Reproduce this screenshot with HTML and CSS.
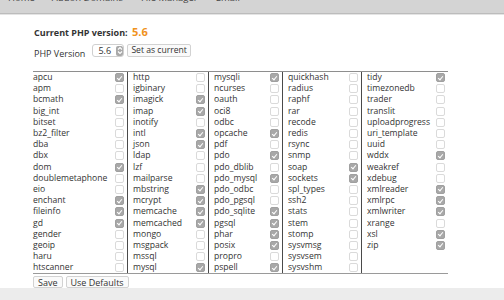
FILE: index.html
```html
<!DOCTYPE html>
<html>
<head>
<meta charset="utf-8">
<link rel="stylesheet" href="styles.css">
</head>
<body>
<div class="topbar">
  <ul class="nav">
    <li class="n1">Home</li>
    <li class="n2">Addon Domains</li>
    <li class="n3">File Manager</li>
    <li class="n4">Email</li>
  </ul>
</div>
<div class="content">
  <div class="current">Current PHP version: <span class="ver">5.6</span></div>
  <div class="vrow">
    <span class="vlabel">PHP Version</span>
    <span class="select">5.6<span class="stepper"><svg width="6" height="9" viewBox="0 0 6 9"><path d="M1 3.5 L3 1.5 L5 3.5 M1 5.5 L3 7.5 L5 5.5" fill="none" stroke="#fff" stroke-width="1.1"/></svg></span></span>
    <span class="btn">Set as current</span>
  </div>
  <div class="table">
    <div class="col c1">
      <div class="row"><span>apcu</span><i class="cb on"></i></div>
      <div class="row"><span>apm</span><i class="cb"></i></div>
      <div class="row"><span>bcmath</span><i class="cb on"></i></div>
      <div class="row"><span>big_int</span><i class="cb"></i></div>
      <div class="row"><span>bitset</span><i class="cb"></i></div>
      <div class="row"><span>bz2_filter</span><i class="cb"></i></div>
      <div class="row"><span>dba</span><i class="cb"></i></div>
      <div class="row"><span>dbx</span><i class="cb"></i></div>
      <div class="row"><span>dom</span><i class="cb on"></i></div>
      <div class="row"><span>doublemetaphone</span><i class="cb"></i></div>
      <div class="row"><span>eio</span><i class="cb"></i></div>
      <div class="row"><span>enchant</span><i class="cb on"></i></div>
      <div class="row"><span>fileinfo</span><i class="cb on"></i></div>
      <div class="row"><span>gd</span><i class="cb on"></i></div>
      <div class="row"><span>gender</span><i class="cb"></i></div>
      <div class="row"><span>geoip</span><i class="cb"></i></div>
      <div class="row"><span>haru</span><i class="cb"></i></div>
      <div class="row"><span>htscanner</span><i class="cb"></i></div>
    </div>
    <div class="col c2">
      <div class="row"><span>http</span><i class="cb"></i></div>
      <div class="row"><span>igbinary</span><i class="cb"></i></div>
      <div class="row"><span>imagick</span><i class="cb on"></i></div>
      <div class="row"><span>imap</span><i class="cb on"></i></div>
      <div class="row"><span>inotify</span><i class="cb"></i></div>
      <div class="row"><span>intl</span><i class="cb on"></i></div>
      <div class="row"><span>json</span><i class="cb on"></i></div>
      <div class="row"><span>ldap</span><i class="cb"></i></div>
      <div class="row"><span>lzf</span><i class="cb"></i></div>
      <div class="row"><span>mailparse</span><i class="cb"></i></div>
      <div class="row"><span>mbstring</span><i class="cb on"></i></div>
      <div class="row"><span>mcrypt</span><i class="cb on"></i></div>
      <div class="row"><span>memcache</span><i class="cb on"></i></div>
      <div class="row"><span>memcached</span><i class="cb on"></i></div>
      <div class="row"><span>mongo</span><i class="cb"></i></div>
      <div class="row"><span>msgpack</span><i class="cb"></i></div>
      <div class="row"><span>mssql</span><i class="cb"></i></div>
      <div class="row"><span>mysql</span><i class="cb on"></i></div>
    </div>
    <div class="col c3">
      <div class="row"><span>mysqli</span><i class="cb on"></i></div>
      <div class="row"><span>ncurses</span><i class="cb"></i></div>
      <div class="row"><span>oauth</span><i class="cb"></i></div>
      <div class="row"><span>oci8</span><i class="cb"></i></div>
      <div class="row"><span>odbc</span><i class="cb"></i></div>
      <div class="row"><span>opcache</span><i class="cb on"></i></div>
      <div class="row"><span>pdf</span><i class="cb"></i></div>
      <div class="row"><span>pdo</span><i class="cb on"></i></div>
      <div class="row"><span>pdo_dblib</span><i class="cb"></i></div>
      <div class="row"><span>pdo_mysql</span><i class="cb on"></i></div>
      <div class="row"><span>pdo_odbc</span><i class="cb"></i></div>
      <div class="row"><span>pdo_pgsql</span><i class="cb"></i></div>
      <div class="row"><span>pdo_sqlite</span><i class="cb on"></i></div>
      <div class="row"><span>pgsql</span><i class="cb on"></i></div>
      <div class="row"><span>phar</span><i class="cb on"></i></div>
      <div class="row"><span>posix</span><i class="cb on"></i></div>
      <div class="row"><span>propro</span><i class="cb"></i></div>
      <div class="row"><span>pspell</span><i class="cb on"></i></div>
    </div>
    <div class="col c4">
      <div class="row"><span>quickhash</span><i class="cb"></i></div>
      <div class="row"><span>radius</span><i class="cb"></i></div>
      <div class="row"><span>raphf</span><i class="cb"></i></div>
      <div class="row"><span>rar</span><i class="cb"></i></div>
      <div class="row"><span>recode</span><i class="cb"></i></div>
      <div class="row"><span>redis</span><i class="cb"></i></div>
      <div class="row"><span>rsync</span><i class="cb"></i></div>
      <div class="row"><span>snmp</span><i class="cb"></i></div>
      <div class="row"><span>soap</span><i class="cb on"></i></div>
      <div class="row"><span>sockets</span><i class="cb on"></i></div>
      <div class="row"><span>spl_types</span><i class="cb"></i></div>
      <div class="row"><span>ssh2</span><i class="cb"></i></div>
      <div class="row"><span>stats</span><i class="cb"></i></div>
      <div class="row"><span>stem</span><i class="cb"></i></div>
      <div class="row"><span>stomp</span><i class="cb"></i></div>
      <div class="row"><span>sysvmsg</span><i class="cb"></i></div>
      <div class="row"><span>sysvsem</span><i class="cb"></i></div>
      <div class="row"><span>sysvshm</span><i class="cb"></i></div>
    </div>
    <div class="col c5">
      <div class="row"><span>tidy</span><i class="cb on"></i></div>
      <div class="row"><span>timezonedb</span><i class="cb"></i></div>
      <div class="row"><span>trader</span><i class="cb"></i></div>
      <div class="row"><span>translit</span><i class="cb"></i></div>
      <div class="row"><span>uploadprogress</span><i class="cb"></i></div>
      <div class="row"><span>uri_template</span><i class="cb"></i></div>
      <div class="row"><span>uuid</span><i class="cb"></i></div>
      <div class="row"><span>wddx</span><i class="cb on"></i></div>
      <div class="row"><span>weakref</span><i class="cb"></i></div>
      <div class="row"><span>xdebug</span><i class="cb"></i></div>
      <div class="row"><span>xmlreader</span><i class="cb on"></i></div>
      <div class="row"><span>xmlrpc</span><i class="cb on"></i></div>
      <div class="row"><span>xmlwriter</span><i class="cb on"></i></div>
      <div class="row"><span>xrange</span><i class="cb"></i></div>
      <div class="row"><span>xsl</span><i class="cb on"></i></div>
      <div class="row"><span>zip</span><i class="cb on"></i></div>
    </div>
  </div>
  <div class="actions">
    <span class="btn">Save</span>
    <span class="btn">Use Defaults</span>
  </div>
</div>
<div class="footer"></div>
</body>
</html>
```
FILE: styles.css
```css
html, body {
  margin: 0;
  padding: 0;
  background: #fff;
}
body {
  font-family: "Open Sans", "DejaVu Sans", sans-serif;
  color: #333;
  width: 504px;
  height: 300px;
  overflow: hidden;
  display: flex;
  flex-direction: column;
}
.topbar {
  height: 13px;
  background: #d4d4d4;
  border-bottom: 1px solid #bcbcbc;
  box-shadow: 0 1px 0 #e4e4e4;
  overflow: hidden;
  flex: none;
}
.nav {
  list-style: none;
  margin: -9px 0 0 0;
  padding: 0;
  display: flex;
  font-size: 9.5px;
  line-height: 14px;
  color: #444;
}
.nav li { flex: none; }
.n1 { margin-left: 8px; }
.n2 { margin-left: 17px; }
.n3 { margin-left: 18px; }
.n4 { margin-left: 18px; }

.content {
  padding: 12px 0 0 33px;
  flex: 1;
}
.current {
  font-size: 9px;
  font-weight: bold;
  color: #333;
  line-height: 12px;
  height: 12px;
  padding-left: 1px;
}
.current .ver {
  color: #f0921c;
  font-size: 11px;
  margin-left: 2px;
}
.vrow {
  display: flex;
  align-items: flex-end;
  margin-top: 5px;
  height: 16px;
  font-size: 9px;
}
.vlabel {
  padding-left: 1px;
  line-height: 12px;
  margin-bottom: -1px;
}
.select {
  margin-left: 7px;
  width: 32px;
  height: 13px;
  box-sizing: border-box;
  border: 1px solid #d0d0d0;
  border-radius: 3px;
  display: flex;
  align-items: center;
  padding-left: 5px;
  line-height: 11px;
  gap: 5px;
  margin-bottom: 2px;
}
.stepper {
  width: 9px;
  height: 10px;
  background: #a9a9a9;
  border-radius: 2px;
  display: flex;
  align-items: center;
  justify-content: center;
}
.btn {
  display: inline-flex;
  align-items: center;
  height: 13px;
  box-sizing: border-box;
  padding: 0 3px;
  border: 1px solid #d2d2d2;
  border-radius: 2px;
  background: #fafafa;
  font-size: 9px;
  line-height: 11px;
  color: #333;
  white-space: nowrap;
}
.vrow .btn {
  margin-left: 3px;
  margin-bottom: 2px;
  font-size: 8.6px;
}
.table {
  margin-top: 12px;
  display: flex;
  width: 415px;
  border-top: 1px solid #8e8e8e;
  border-bottom: 1px solid #9a9a9a;
  font-size: 8.6px;
}
.col {
  display: flex;
  flex-direction: column;
  box-sizing: border-box;
  padding-right: 3px;
}
.col + .col {
  border-left: 1px solid #4a4a4a;
  padding-left: 5px;
}
.c1 { width: 94px; }
.c2 { width: 81px; }
.c3 { width: 74px; }
.c4 { width: 79px; }
.c5 { width: 87px; }
.row {
  height: 11.2px;
  display: flex;
  align-items: center;
  justify-content: space-between;
  line-height: 11px;
  color: #333;
  white-space: nowrap;
}
.cb {
  width: 7px;
  height: 7px;
  border: 1px solid #dadada;
  border-radius: 2px;
  background: #fff;
  position: relative;
  flex: none;
}
.cb.on {
  background: #a8a8a8;
  border-color: #a0a0a0;
}
.cb.on::after {
  content: "";
  position: absolute;
  left: 2px;
  top: 0.5px;
  width: 2px;
  height: 4px;
  border: solid #fff;
  border-width: 0 1px 1px 0;
  transform: rotate(40deg);
}
.actions {
  display: flex;
  gap: 3px;
  margin-top: 2px;
}
.actions .btn {
  height: 12px;
  padding: 0 4px;
}
.footer {
  height: 14px;
  background: #ececec;
  flex: none;
}
```
